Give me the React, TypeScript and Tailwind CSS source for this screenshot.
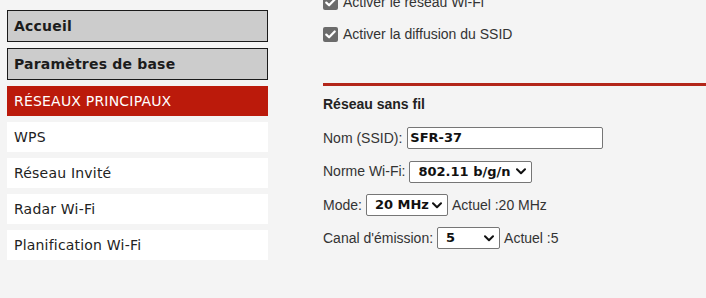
import React from "react";

const Chevron = () => (
  <svg width="10" height="7" viewBox="0 0 10 7" fill="none">
    <path d="M1 1.2 L5 5.2 L9 1.2" stroke="#111" strokeWidth="2" strokeLinecap="round" strokeLinejoin="round" />
  </svg>
);

const Check = () => (
  <span className="flex h-[15px] w-[15px] shrink-0 items-center justify-center rounded-[2px] bg-[#6b6b6b]">
    <svg width="11" height="9" viewBox="0 0 11 9" fill="none">
      <path d="M1.3 4.6 L4.1 7.3 L9.7 1.5" stroke="#fff" strokeWidth="2.2" strokeLinecap="round" strokeLinejoin="round" />
    </svg>
  </span>
);

function Select({ value, width }: { value: string; width: string }) {
  return (
    <div
      className={`flex h-[22px] ${width} items-center justify-between rounded-[2px] border border-[#767676] bg-white pl-[8px] pr-[5px] font-['DejaVu_Sans',sans-serif] text-[13px] font-bold text-[#111]`}
    >
      <span>{value}</span>
      <Chevron />
    </div>
  );
}

export default function App() {
  const navBold = "flex h-[32px] items-center border border-[#1a1a1a] bg-[#cccccc] pl-[6px] font-bold text-[#1c1c1c]";
  const navItem = "flex h-[30px] items-center bg-white pl-[7px] text-[#222]";
  return (
    <div className="flex h-[298px] w-[706px] overflow-hidden bg-[#f4f4f4]">
      <div className="flex w-[268px] shrink-0 flex-col gap-[6px] pl-[7px] pt-[10px] font-['DejaVu_Sans',sans-serif] text-[14px] tracking-[0.2px]">
        <div className={navBold}>Accueil</div>
        <div className={navBold}>Paramètres de base</div>
        <div className="flex h-[30px] items-center bg-[#bb1a0b] pl-[7px] text-white">RÉSEAUX PRINCIPAUX</div>
        <div className={navItem}>WPS</div>
        <div className={navItem}>Réseau Invité</div>
        <div className={navItem}>Radar Wi-Fi</div>
        <div className={navItem}>Planification Wi-Fi</div>
      </div>
      <div className="ml-[55px] flex flex-1 flex-col font-['Liberation_Sans',Arial,sans-serif] text-[14px] text-[#333]">
        <div className="-mt-[5px] flex flex-col gap-[17px]">
          <div className="flex h-[15px] items-center gap-[5px]">
            <Check />
            <span>Activer le réseau Wi-Fi</span>
          </div>
          <div className="flex h-[15px] items-center gap-[5px]">
            <Check />
            <span>Activer la diffusion du SSID</span>
          </div>
        </div>
        <div className="mt-[41px] h-[3px] bg-[#b3261a]" />
        <div className="mt-[10px] h-[16px] font-bold leading-[16px] text-[#222]">Réseau sans fil</div>
        <div className="mt-[15px] flex flex-col gap-[11px]">
          <div className="flex h-[22px] items-center gap-[5px]">
            <span>Nom (SSID):</span>
            <div className="flex h-[22px] w-[196px] items-center rounded-[2px] border border-[#767676] bg-white pl-[2px] font-['DejaVu_Sans',sans-serif] text-[13px] font-bold text-[#111]">
              SFR-37
            </div>
          </div>
          <div className="flex h-[23px] items-center gap-[4px]">
            <span>Norme Wi-Fi:</span>
            <Select value="802.11 b/g/n" width="w-[123px]" />
          </div>
          <div className="flex h-[22px] items-center gap-[4px]">
            <span>Mode:</span>
            <Select value="20 MHz" width="w-[82px]" />
            <span>Actuel :20 MHz</span>
          </div>
          <div className="flex h-[22px] items-center gap-[4px]">
            <span>Canal d'émission:</span>
            <Select value="5" width="w-[63px]" />
            <span>Actuel :5</span>
          </div>
        </div>
      </div>
    </div>
  );
}
